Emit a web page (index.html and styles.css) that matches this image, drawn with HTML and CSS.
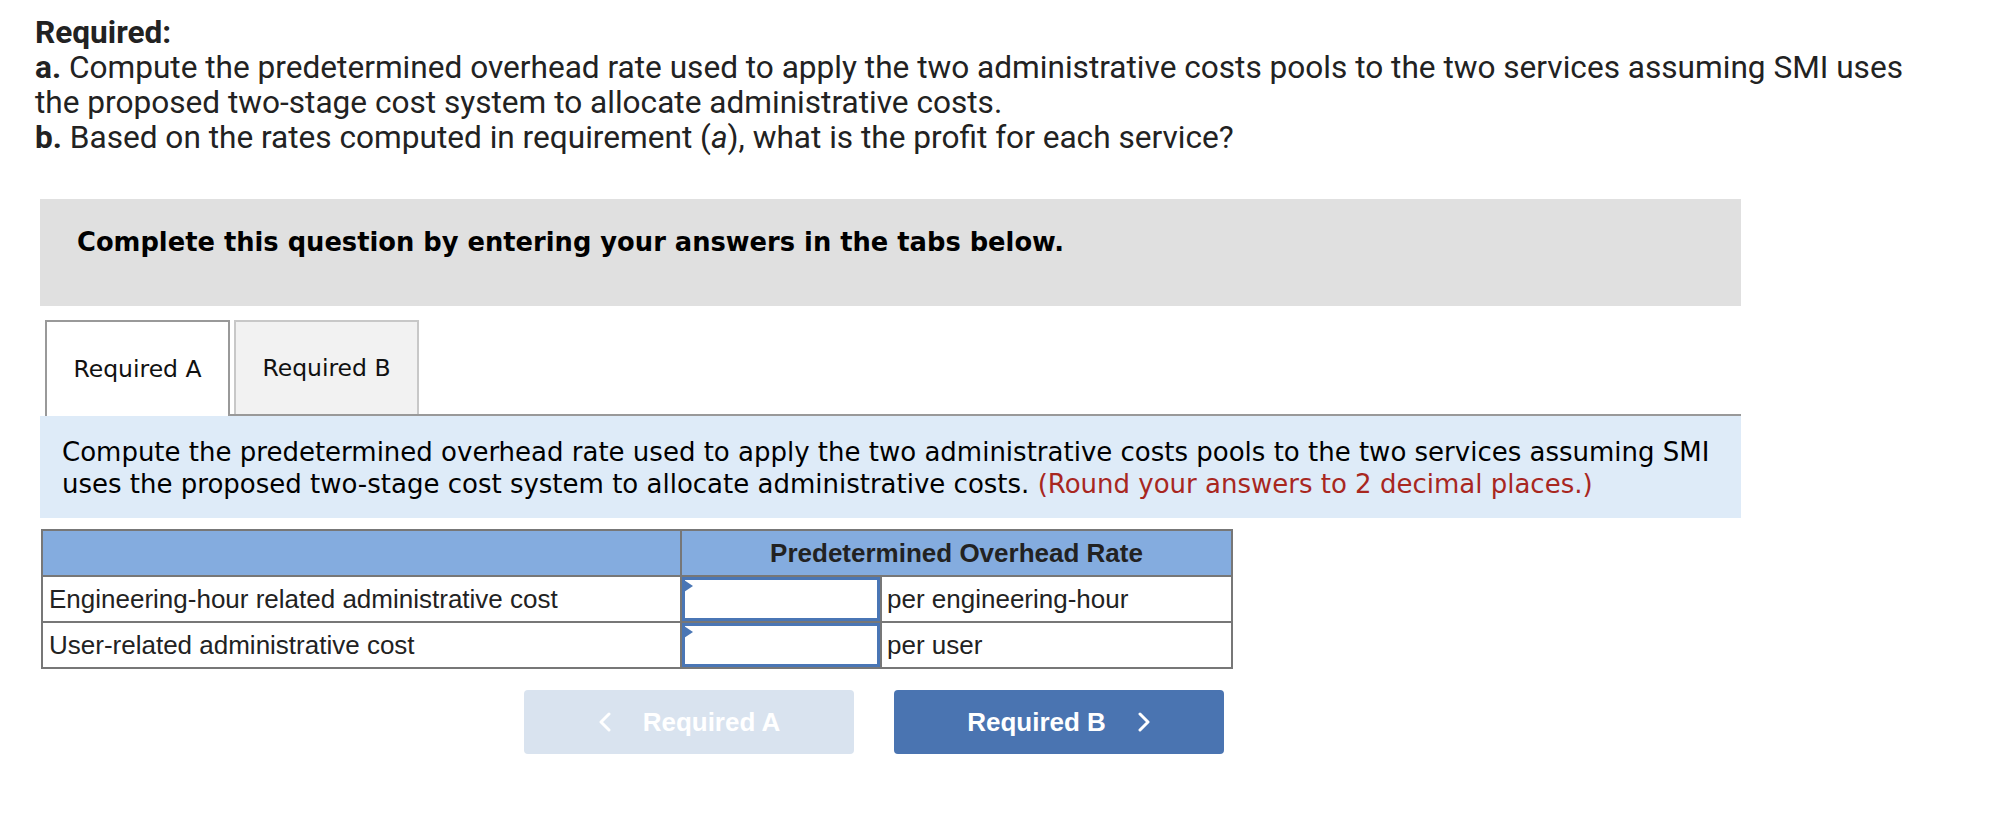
FILE: index.html
```html
<!DOCTYPE html>
<html lang="en">
<head>
<meta charset="utf-8">
<title>Required</title>
<link rel="stylesheet" href="styles.css">
</head>
<body>
<div class="req">
  <div class="req-title">Required:</div>
  <div><b>a.</b> Compute the predetermined overhead rate used to apply the two administrative costs pools to the two services assuming SMI uses the proposed two-stage cost system to allocate administrative costs.</div>
  <div><b>b.</b> Based on the rates computed in requirement (<i>a</i>), what is the profit for each service?</div>
</div>

<div class="instructions">Complete this question by entering your answers in the tabs below.</div>

<div class="tabs">
  <div class="tab active">Required A</div>
  <div class="tab">Required B</div>
</div>

<div class="prompt">Compute the predetermined overhead rate used to apply the two administrative costs pools to the two services assuming SMI uses the proposed two-stage cost system to allocate administrative costs. <span class="hint">(Round your answers to 2 decimal places.)</span></div>

<table class="rate-table">
  <thead>
    <tr><th class="c1"></th><th colspan="2">Predetermined Overhead Rate</th></tr>
  </thead>
  <tbody>
    <tr>
      <td class="label c1">Engineering-hour related administrative cost</td>
      <td class="inp c2"><div class="field"><input type="text" aria-label="Engineering-hour rate"><span class="flag"></span></div></td>
      <td class="unit">per engineering-hour</td>
    </tr>
    <tr>
      <td class="label c1">User-related administrative cost</td>
      <td class="inp c2"><div class="field"><input type="text" aria-label="User rate"><span class="flag"></span></div></td>
      <td class="unit">per user</td>
    </tr>
  </tbody>
</table>

<div class="nav">
  <button class="btn prev" type="button">
    <svg class="chev" width="14" height="20" viewBox="0 0 14 20"><polyline points="11,2 3,10 11,18" fill="none" stroke="#fff" stroke-width="3" stroke-linecap="round" stroke-linejoin="round"/></svg>
    <span>Required A</span>
  </button>
  <button class="btn next" type="button">
    <span>Required B</span>
    <svg class="chev" width="14" height="20" viewBox="0 0 14 20"><polyline points="3,2 11,10 3,18" fill="none" stroke="#fff" stroke-width="3" stroke-linecap="round" stroke-linejoin="round"/></svg>
  </button>
</div>
</body>
</html>
```

FILE: styles.css
```css
html, body {
  margin: 0;
  padding: 0;
  background: #fff;
}

.req {
  font-family: Roboto, "Liberation Sans", sans-serif;
  font-size: 31.6px;
  line-height: 35px;
  color: #222;
  padding: 15px 0 0 35px;
  width: 1905px;
}

.req-title,
.req b {
  font-weight: 700;
}

.instructions {
  margin: 44px 0 0 40px;
  width: 1701px;
  box-sizing: border-box;
  background: #e0e0e0;
  padding: 28px 37px 49px;
  font-family: "DejaVu Sans", Verdana, sans-serif;
  font-weight: 700;
  font-size: 25.75px;
  line-height: 30px;
  color: #000;
}

.tabs {
  display: flex;
  gap: 4px;
  margin: 14px 0 0 45px;
  width: 1696px;
  border-bottom: 2px solid #999;
}

.tab {
  width: 185px;
  height: 94px;
  box-sizing: border-box;
  display: flex;
  align-items: center;
  justify-content: center;
  font-family: "DejaVu Sans", Verdana, sans-serif;
  font-size: 23.5px;
  color: #111;
  background: #f2f2f2;
  border: 2px solid #c8c8c8;
  border-bottom: none;
}

.tab.active {
  background: #fff;
  border-color: #999;
  height: 96px;
  margin-bottom: -2px;
}

.prompt {
  margin-left: 40px;
  width: 1701px;
  box-sizing: border-box;
  background: #deebf8;
  padding: 20px 15px 18px 22px;
  font-family: "DejaVu Sans", Verdana, sans-serif;
  font-size: 26px;
  line-height: 32px;
  color: #000;
}

.hint {
  color: #a8271f;
}

.rate-table {
  margin: 11px 0 0 41px;
  width: 1192px;
  border-collapse: collapse;
  font-family: "Liberation Sans", Arial, sans-serif;
  font-size: 26px;
  color: #222;
}

.rate-table th,
.rate-table td {
  border: 2px solid #777;
  height: 44px;
  padding: 0;
}

.rate-table th {
  background: #84acdf;
  font-weight: 700;
  text-align: center;
}

.rate-table .c1 {
  width: 631px;
}

.rate-table .c2 {
  width: 198px;
}

.label {
  padding-left: 6px !important;
  text-align: left;
}

.unit {
  padding-left: 5px !important;
}

.field {
  position: relative;
  height: 44px;
}

.field input {
  display: block;
  width: 100%;
  height: 44px;
  box-sizing: border-box;
  border: 3px solid #4a76b5;
  margin: 0;
  padding: 0 6px;
  font: inherit;
  background: #fff;
  outline: none;
}

.flag {
  position: absolute;
  left: 2px;
  top: 3px;
  width: 0;
  height: 0;
  border-left: 9px solid #4a76b5;
  border-top: 6px solid transparent;
  border-bottom: 6px solid transparent;
}

.nav {
  display: flex;
  gap: 40px;
  margin: 21px 0 0 524px;
}

.btn {
  width: 330px;
  height: 64px;
  border: none;
  border-radius: 4px;
  display: flex;
  align-items: center;
  justify-content: center;
  gap: 31px;
  font-family: "Liberation Sans", Arial, sans-serif;
  font-weight: 700;
  font-size: 26px;
  color: #fff;
  padding: 0;
  cursor: pointer;
}

.btn.prev {
  background: #d9e3ef;
}

.btn.next {
  background: #4a74b1;
}

.chev {
  display: block;
}
```
